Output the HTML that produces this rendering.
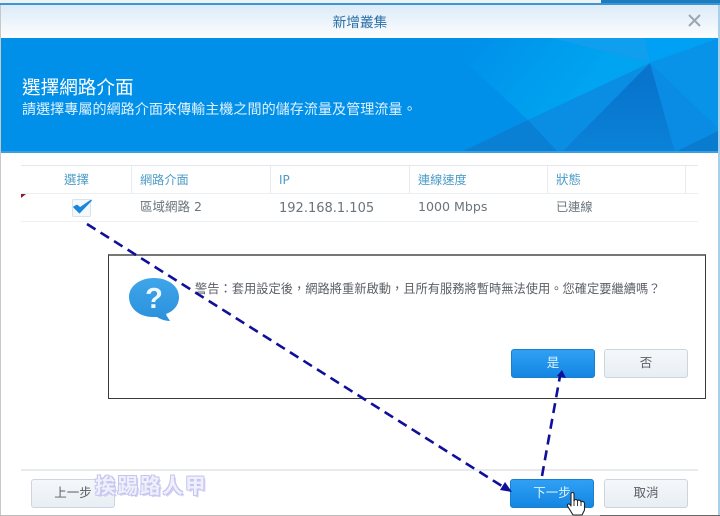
<!DOCTYPE html>
<html><head><meta charset="utf-8">
<style>
html,body{margin:0;padding:0;background:#fff}
#p{position:relative;width:720px;height:516px;overflow:hidden;background:#fff;font-family:"Liberation Sans","Noto Sans CJK TC",sans-serif;color:#4a5a64}
.a{position:absolute;white-space:nowrap}
.th{color:#4a9cc8;font-size:13px;line-height:18px;top:171px}
.td{font-family:"DejaVu Sans","Noto Sans CJK TC",sans-serif;font-size:13px;line-height:18px;top:198px;color:#6a747b}
.v{position:absolute;top:166px;width:1px;height:27px;background:#e6ebef}
.b{position:absolute;box-sizing:border-box;width:84px;height:29px;border-radius:3px;text-align:center;font-size:12.5px;line-height:27px}
.g{background:linear-gradient(#f5f8fa,#e8eef3);border:1px solid #ccd5dd;color:#5a5f65}
.u{background:linear-gradient(#30a0f4,#1486e2);border:1px solid #1a80cc;color:#dff3ff}
</style></head><body>
<div id="p">
<!-- top strip -->
<div class="a" style="left:0;top:0;width:601px;height:3px;background:#eef2f5"></div>
<div class="a" style="left:601px;top:0;width:119px;height:4px;background:#1c7cc0"></div>
<div class="a" style="left:0;top:3px;width:720px;height:2px;background:#3b97d4"></div>
<!-- title bar -->
<div class="a" style="left:0;top:5px;width:720px;height:33px;background:linear-gradient(#dcebf8,#fcfdfe)"></div>
<div class="a" style="left:0;top:13px;width:720px;text-align:center;font-size:13.7px;line-height:20px;color:#2b6fa6">新增叢集</div>
<svg class="a" style="left:686px;top:13px" width="17" height="15"><path d="M3 2 L14 13 M14 2 L3 13" stroke="#9aa7b0" stroke-width="2" fill="none"/></svg>
<!-- banner -->
<svg class="a" style="left:0;top:38px" width="720" height="115" viewBox="0 38 720 115">
<defs>
<linearGradient id="l" gradientUnits="userSpaceOnUse" x1="470" y1="40" x2="560" y2="115"><stop offset="0" stop-color="#0090ea"/><stop offset="1" stop-color="#00a4f0"/></linearGradient>
<linearGradient id="d" gradientUnits="userSpaceOnUse" x1="610" y1="80" x2="610" y2="152"><stop offset="0" stop-color="#0874cc"/><stop offset="1" stop-color="#0a82d8"/></linearGradient>
</defs>
<rect x="0" y="38" width="720" height="115" fill="#0090ea"/>
<polygon points="440,38 551,38 650,63 528,120" fill="url(#l)"/>
<polygon points="551,38 645,38 650,63" fill="#109eee"/>
<polygon points="645,38 720,38 650,63" fill="#00a0f4"/>
<polygon points="650,63 720,38 720,130" fill="#0892e8"/>
<polygon points="528,120 650,63 562,152 558,152" fill="#0a8ee4"/>
<polygon points="461,152 528,120 558,152" fill="#0a80d4"/>
<polygon points="562,152 650,63 675,152" fill="url(#d)"/>
<polygon points="650,63 720,130 675,152" fill="#0a8ce4"/>
<polygon points="675,152 720,130 720,152" fill="#0a7cd0"/>
<rect x="0" y="151" width="720" height="2" fill="#3b9fdf"/>
</svg>
<div class="a" style="left:22px;top:76px;font-size:18.6px;line-height:24px;color:#fff">選擇網路介面</div>
<div class="a" style="left:22px;top:99px;font-size:14.1px;line-height:20px;color:#dff1fd">請選擇專屬的網路介面來傳輸主機之間的儲存流量及管理流量。</div>
<!-- table -->
<div class="a" style="left:21px;top:165px;width:677px;height:1px;background:#e4e8ec"></div>
<div class="a" style="left:21px;top:193px;width:677px;height:1px;background:#edf0f3"></div>
<div class="a" style="left:21px;top:221px;width:677px;height:1px;background:#eef1f4"></div>
<div class="v" style="left:131px"></div><div class="v" style="left:270px"></div><div class="v" style="left:409px"></div><div class="v" style="left:547px"></div><div class="v" style="left:685px"></div>
<div class="a th" style="left:64px;font-size:12.5px">選擇</div>
<div class="a th" style="left:140px;font-size:12.2px">網路介面</div>
<div class="a th" style="left:279px;font-family:'DejaVu Sans',sans-serif;font-size:12px">IP</div>
<div class="a th" style="left:418px;font-size:12.2px">連線速度</div>
<div class="a th" style="left:556px;font-size:12.5px">狀態</div>
<div class="a td" style="left:140px;font-size:12.5px">區域網路 2</div>
<div class="a td" style="left:279px;top:200px">192.168.1.105</div>
<div class="a td" style="left:418px;font-size:12.6px">1000 Mbps</div>
<div class="a td" style="left:556px;font-size:12.2px">已連線</div>
<svg class="a" style="left:21px;top:194px" width="6" height="5"><polygon points="0,0 5,0 0,4" fill="#8c1a2c"/></svg>
<svg class="a" style="left:71px;top:197px" width="22" height="21"><rect x="1.5" y="2.5" width="18" height="17" rx="1" fill="#f4f8fb" stroke="#d8e3ec"/><path d="M3 10 L8.5 15.5 L20 3.5 L9 11 L6 8.5 Z" fill="#1a86dc" stroke="#1a86dc" stroke-width="1.6" stroke-linejoin="round"/></svg>
<!-- dialog -->
<div class="a" style="left:108px;top:254px;width:598px;height:145px;box-sizing:border-box;background:#fff;border:1px solid #3a3a3a;border-top-color:#777;border-top-width:2px"></div>
<svg class="a" style="left:128px;top:276px" width="54" height="48">
<defs><linearGradient id="q" x1="0" y1="0" x2="0" y2="1"><stop offset="0" stop-color="#3fa6ea"/><stop offset="1" stop-color="#2a90dc"/></linearGradient></defs>
<path d="M26 2 C40 2 51 10 51 21 C51 29 46 35 38 38 C39 41 41 43 42 45 C37 45 32 43 29 41 C27 41 26 41 25 41 C11 41 1 32 1 21 C1 10 12 2 26 2 Z" fill="url(#q)"/>
<text x="26" y="32" text-anchor="middle" font-family="Liberation Sans,sans-serif" font-weight="bold" font-size="29" fill="#eef8ff">?</text>
</svg>
<div class="a" style="left:195px;top:280px;font-size:12.25px;line-height:18px;color:#5a5f65">警告：套用設定後，網路將重新啟動，且所有服務將暫時無法使用。您確定要繼續嗎？</div>
<div class="b u" style="left:511px;top:349px">是</div>
<div class="b g" style="left:604px;top:349px">否</div>
<!-- footer -->
<div class="a" style="left:21px;top:469px;width:677px;height:2px;background:#e8eaec"></div>
<div class="b g" style="left:31px;top:479px">上一步</div>
<div class="b u" style="left:510px;top:479px">下一步</div>
<div class="b g" style="left:604px;top:479px">取消</div>
<!-- frame -->
<div class="a" style="left:0;top:5px;width:1px;height:511px;background:#c8c8c8"></div>
<div class="a" style="left:718px;top:5px;width:2px;height:511px;background:#a9d0ea"></div>
<div class="a" style="left:0;top:515px;width:600px;height:1px;background:#bcbcbc"></div>
<div class="a" style="left:600px;top:515px;width:120px;height:1px;background:#666"></div>
<!-- arrows -->
<svg class="a" style="left:0;top:0" width="720" height="516">
<line x1="87" y1="224" x2="505" y2="488" stroke="#0f0f9a" stroke-width="2.6" stroke-dasharray="10 6"/>
<polygon points="512,492 500,490 505,482" fill="#0f0f9a"/>
<line x1="542" y1="476" x2="560" y2="376" stroke="#0f0f9a" stroke-width="2.6" stroke-dasharray="10 6"/>
<polygon points="562,370 566,378 557,376" fill="#0f0f9a"/>
</svg>
<!-- watermark -->
<div class="a" style="left:95px;top:475px;font-size:20.5px;line-height:24px;letter-spacing:2px;font-weight:bold;color:#f0f0fc;text-shadow:-1px -1px 0 #c4c4f0,1px -1px 0 #c4c4f0,-1px 1px 0 #c4c4f0,1px 1px 0 #c4c4f0,2px 2px 0 #d4d4f4;font-family:'Liberation Sans','Noto Sans CJK TC',sans-serif">挨踢路人甲</div>
<!-- cursor -->
<svg class="a" style="left:566px;top:491px" width="22" height="25">
<path d="M5 3 C5 1 8 1 8 3 L8 10 C9 8 11 8 11.5 10 C12.5 8.5 14.5 9 15 11 C16 10 18 10.5 18.5 12 L18.5 19 L16 24 L7 24 L1.5 15 C1 13 3 12 4.5 14 L5 15 Z" fill="#fff" stroke="#222" stroke-width="1.1" stroke-linejoin="round"/>
<path d="M8 10 L8 15 M11.5 10 L11.5 15 M15 11 L15 15" stroke="#222" stroke-width="0.9" fill="none"/>
</svg>
</div>
</body></html>
